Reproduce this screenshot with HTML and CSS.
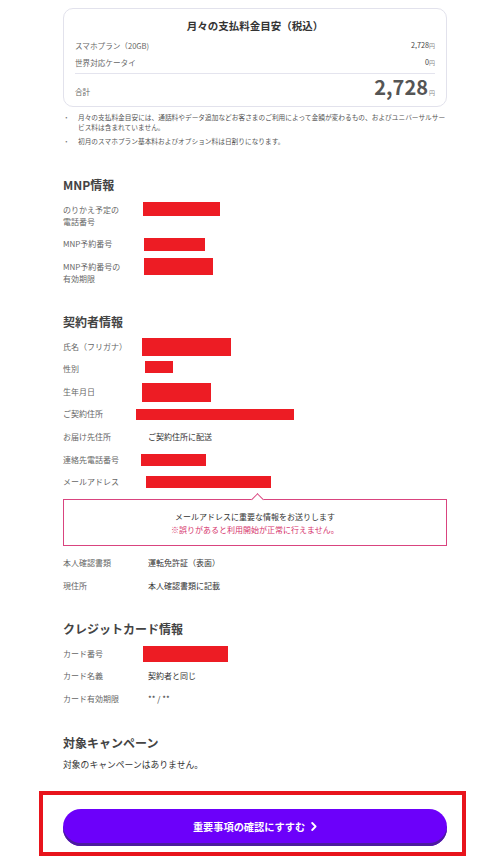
FILE: index.html
```html
<!DOCTYPE html>
<html lang="ja">
<head>
<meta charset="utf-8">
<title>確認</title>
<link rel="stylesheet" href="styles.css">
</head>
<body>
<main class="page">
  <section class="fee-card">
    <h2 class="fee-title">月々の支払料金目安（税込）</h2>
    <div class="fee-row"><span>スマホプラン（20GB)</span><span class="fee-val">2,728<small>円</small></span></div>
    <div class="fee-row"><span>世界対応ケータイ</span><span class="fee-val">0<small>円</small></span></div>
    <div class="fee-total"><span class="total-label">合計</span><span class="total-val">2,728<small>円</small></span></div>
  </section>
  <ul class="notes">
    <li>月々の支払料金目安には、通話料やデータ追加などお客さまのご利用によって金額が変わるもの、およびユニバーサルサービス料は含まれていません。</li>
    <li>初月のスマホプラン基本料およびオプション料は日割りになります。</li>
  </ul>

  <section class="section first">
    <h3 class="sec-title">MNP情報</h3>
    <div class="row"><div class="label">のりかえ予定の<br>電話番号</div><div class="value"><span class="redact r-mnp1"></span></div></div>
    <div class="row"><div class="label">MNP予約番号</div><div class="value"><span class="redact r-mnp2"></span></div></div>
    <div class="row"><div class="label">MNP予約番号の<br>有効期限</div><div class="value"><span class="redact r-mnp3"></span></div></div>
  </section>

  <section class="section">
    <h3 class="sec-title">契約者情報</h3>
    <div class="row"><div class="label">氏名（フリガナ）</div><div class="value"><span class="redact r-name"></span></div></div>
    <div class="row"><div class="label">性別</div><div class="value"><span class="redact r-sex"></span></div></div>
    <div class="row"><div class="label">生年月日</div><div class="value"><span class="redact r-birth"></span></div></div>
    <div class="row"><div class="label">ご契約住所</div><div class="value"><span class="redact r-addr"></span></div></div>
    <div class="row"><div class="label">お届け先住所</div><div class="value text">ご契約住所に配送</div></div>
    <div class="row"><div class="label">連絡先電話番号</div><div class="value"><span class="redact r-tel"></span></div></div>
    <div class="row"><div class="label">メールアドレス</div><div class="value"><span class="redact r-mail"></span></div></div>
    <div class="callout">
      <span class="callout-arrow"></span>
      <p class="callout-main">メールアドレスに重要な情報をお送りします</p>
      <p class="callout-warn">※誤りがあると利用開始が正常に行えません。</p>
    </div>
    <div class="row"><div class="label">本人確認書類</div><div class="value text">運転免許証（表面）</div></div>
    <div class="row"><div class="label">現住所</div><div class="value text">本人確認書類に記載</div></div>
  </section>

  <section class="section">
    <h3 class="sec-title">クレジットカード情報</h3>
    <div class="row"><div class="label">カード番号</div><div class="value"><span class="redact r-card"></span></div></div>
    <div class="row"><div class="label">カード名義</div><div class="value text">契約者と同じ</div></div>
    <div class="row"><div class="label">カード有効期限</div><div class="value text">** / **</div></div>
  </section>

  <section class="section campaign">
    <h3 class="sec-title">対象キャンペーン</h3>
    <p class="campaign-text">対象のキャンペーンはありません。</p>
  </section>

  <div class="cta-frame">
    <button class="cta" type="button">重要事項の確認にすすむ<svg class="chev" width="6" height="9" viewBox="0 0 6 9"><path d="M1.2 1 L4.6 4.5 L1.2 8" fill="none" stroke="#fff" stroke-width="1.8" stroke-linecap="round" stroke-linejoin="round"/></svg></button>
  </div>
</main>
</body>
</html>
```

FILE: styles.css
```css
* { box-sizing: border-box; }
html, body { margin: 0; padding: 0; background: #fff; overflow: hidden; }
body {
  font-family: "Noto Sans CJK JP", "Noto Sans", sans-serif;
  color: #333;
}
.page {
  width: 384px;
  margin-left: 63px;
  padding-top: 8px;
}
h2, h3, p, ul { margin: 0; padding: 0; }

/* fee card */
.fee-card {
  border: 1px solid #e2e2ec;
  border-radius: 10px;
  padding: 10px 11px 2px 11px;
}
.fee-title {
  font-size: 10.5px;
  line-height: 14px;
  font-weight: 700;
  text-align: center;
  color: #333;
  margin-bottom: 3.5px;
}
.fee-row {
  display: flex;
  justify-content: space-between;
  font-size: 7.6px;
  line-height: 17px;
  color: #666;
}
.fee-val { color: #444; font-size: 7.2px; }
.fee-val small, .total-val small {
  font-size: 6px;
  color: #888;
}
.fee-total {
  border-top: 1px solid #e4e4ee;
  margin-top: 2.5px;
  padding-top: 2px;
  display: flex;
  justify-content: space-between;
  align-items: baseline;
}
.total-label { font-size: 7.6px; color: #666; }
.total-val {
  font-size: 20px;
  line-height: 22px;
  font-weight: 700;
  color: #555;
}
.total-val small { font-weight: 400; margin-left: 1px; }

/* notes */
.notes {
  list-style: none;
  width: 386px;
  margin-top: 5px;
  font-size: 6.7px;
  line-height: 10px;
  color: #555;
}
.notes li {
  position: relative;
  padding-left: 15px;
  margin-bottom: 4px;
}
.notes li::before {
  content: "・";
  position: absolute;
  left: 0;
  top: 0;
  color: #777;
}

/* sections */
.section { margin-top: 23.5px; }
.section.first { margin-top: 31px; }
.sec-title {
  font-size: 12px;
  line-height: 16px;
  font-weight: 700;
  color: #444;
  margin-bottom: 5.5px;
}
.row {
  display: flex;
  align-items: flex-start;
  padding: 5.3px 0;
  font-size: 8px;
  line-height: 12px;
}
.label {
  width: 80px;
  flex: none;
  color: #666;
}
.value {
  flex: 1;
  height: 12px;
  display: flex;
  align-items: center;
  color: #333;
}
.value.text { padding-left: 5px; }

.redact { display: block; background: #ed1c24; flex: none; }
.r-mnp1 { width: 77px; height: 14px; margin-left: 0; margin-top: -1px; }
.r-mnp2 { width: 61px; height: 13px; margin-left: 1px; margin-top: 1px; }
.r-mnp3 { width: 69px; height: 17px; margin-left: 1px; }
.r-name { width: 89px; height: 18px; margin-left: -1px; }
.r-sex { width: 28px; height: 12px; margin-left: 2px; margin-top: -4px; }
.r-birth { width: 69px; height: 19px; margin-left: -1px; margin-top: 1px; }
.r-addr { width: 158px; height: 11px; margin-left: -7px; }
.r-tel { width: 65px; height: 12px; margin-left: -2px; }
.r-mail { width: 125px; height: 12px; margin-left: 3px; }
.r-card { width: 85px; height: 16px; margin-left: 0; }

/* callout */
.callout {
  position: relative;
  margin-top: 6px;
  margin-bottom: 5.7px;
  border: 1px solid #d9447f;
  padding: 10px 0 9px;
  text-align: center;
  font-size: 8px;
  line-height: 13px;
}
.callout-arrow {
  position: absolute;
  top: -5px;
  left: 189px;
  width: 9px;
  height: 9px;
  background: #fff;
  border-top: 1px solid #d9447f;
  border-left: 1px solid #d9447f;
  transform: rotate(45deg);
}
.callout-main { color: #333; }
.callout-warn { color: #d6336c; }

/* campaign */
.campaign { margin-top: 25px; }
.campaign .sec-title { margin-bottom: 7px; }
.campaign-text {
  font-size: 8.8px;
  line-height: 13px;
  color: #333;
}

/* CTA */
.cta-frame {
  margin-top: 20px;
  margin-left: -24px;
  width: 427px;
  border: 4px solid #e8141c;
  padding: 14px 15px 6px 20px;
}
.cta {
  display: flex;
  align-items: center;
  justify-content: center;
  gap: 6px;
  width: 384px;
  height: 37px;
  padding: 0 0 3px;
  border: none;
  border-radius: 18px;
  background: #6c00fa;
  box-shadow: inset 0 -3px 0 #4c1c9e;
  color: #fff;
  font-family: "Noto Sans CJK JP", "Noto Sans", sans-serif;
  font-size: 10.2px;
  font-weight: 700;
  cursor: pointer;
}
.chev { display: block; }
```
